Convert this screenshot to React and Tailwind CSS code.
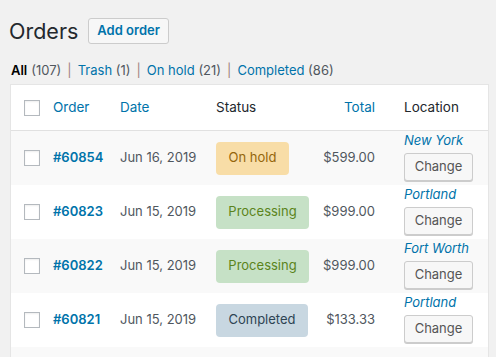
import React from "react";

const rows = [
  { id: "#60854", date: "Jun 16, 2019", status: "On hold", total: "$599.00", loc: "New York", bg: "bg-[#f9f9f9]" },
  { id: "#60823", date: "Jun 15, 2019", status: "Processing", total: "$999.00", loc: "Portland", bg: "bg-white" },
  { id: "#60822", date: "Jun 15, 2019", status: "Processing", total: "$999.00", loc: "Fort Worth", bg: "bg-[#f9f9f9]" },
  { id: "#60821", date: "Jun 15, 2019", status: "Completed", total: "$133.33", loc: "Portland", bg: "bg-white" },
];

function Badge({ status }) {
  if (status === "On hold")
    return <span className="inline-flex h-[33px] w-[73px] items-center justify-center rounded-[4px] bg-[#f8dda7] text-[#94660c]">On hold</span>;
  if (status === "Processing")
    return <span className="inline-flex h-[33px] w-[93px] items-center justify-center rounded-[4px] bg-[#c6e1c6] text-[#5b841b]">Processing</span>;
  return <span className="inline-flex h-[33px] w-[92px] items-center justify-center rounded-[4px] bg-[#c8d7e1] text-[#2e4453]">Completed</span>;
}

function Box() {
  return <span className="block h-[16px] w-[16px] border border-[#b4b9be] bg-white shadow-[inset_0_1px_2px_rgba(0,0,0,0.07)]" />;
}

export default function App() {
  return (
    <div className="h-[357px] w-[496px] overflow-hidden bg-[#f1f1f1] text-[13px] text-[#32373c]" style={{ fontFamily: "Inter, 'Liberation Sans', sans-serif" }}>
      <div className="flex items-center pl-[9px] pt-[16px]">
        <h1 className="text-[21.5px] leading-[30px] font-normal text-[#23282d]">Orders</h1>
        <button className="ml-[10px] h-[26px] rounded-[3px] border border-[#ccc] bg-[#f7f7f7] px-[8px] text-[13px] font-semibold text-[#0073aa]">Add order</button>
      </div>
      <div className="mt-[16px] flex items-center pl-[11px] leading-[16px] text-[#50575e]">
        <span className="font-semibold text-black">All</span>
        <span className="ml-[4px]">(107)</span>
        <span className="mx-[6px] text-[#a08080]">|</span>
        <span className="text-[#0073aa]">Trash <span className="text-[#50575e]">(1)</span></span>
        <span className="mx-[6px] text-[#a08080]">|</span>
        <span className="text-[#0073aa]">On hold <span className="text-[#50575e]">(21)</span></span>
        <span className="mx-[6px] text-[#a08080]">|</span>
        <span className="text-[#0073aa]">Completed <span className="text-[#50575e]">(86)</span></span>
      </div>
      <div className="ml-[10px] mt-[6px] w-[479px] border border-[#e5e5e5] bg-white">
        <div className="flex h-[46px] items-center border-b border-[#e1e1e1] pl-[13px] text-[13.5px]">
          <div className="w-[29px]"><Box /></div>
          <div className="w-[67px] text-[#0073aa]">Order</div>
          <div className="w-[96px] text-[#0073aa]">Date</div>
          <div className="w-[92px] text-[#23282d]">Status</div>
          <div className="w-[67px] text-right text-[#0073aa]">Total</div>
          <div className="pl-[29px] text-[#23282d]">Location</div>
        </div>
        {rows.map((r) => (
          <div key={r.id} className={`flex h-[54px] items-center pl-[13px] ${r.bg}`}>
            <div className="w-[29px]"><Box /></div>
            <div className="w-[67px] font-semibold text-[#0073aa]">{r.id}</div>
            <div className="w-[96px] text-[#50575e]">{r.date}</div>
            <div className="w-[92px]"><Badge status={r.status} /></div>
            <div className="w-[67px] text-right text-[#50575e]">{r.total}</div>
            <div className="flex flex-col items-start self-start pl-[29px] pt-[2px]">
              <span className="italic leading-[14px] text-[#0073aa]">{r.loc}</span>
              <button className="mt-[6px] h-[28px] w-[69px] rounded-[3px] border border-[#ccc] bg-[#f7f7f7] text-[13px] text-[#555] shadow-[0_1px_0_#ccc]">Change</button>
            </div>
          </div>
        ))}
        <div className="h-[20px] bg-[#f9f9f9]" />
      </div>
    </div>
  );
}
